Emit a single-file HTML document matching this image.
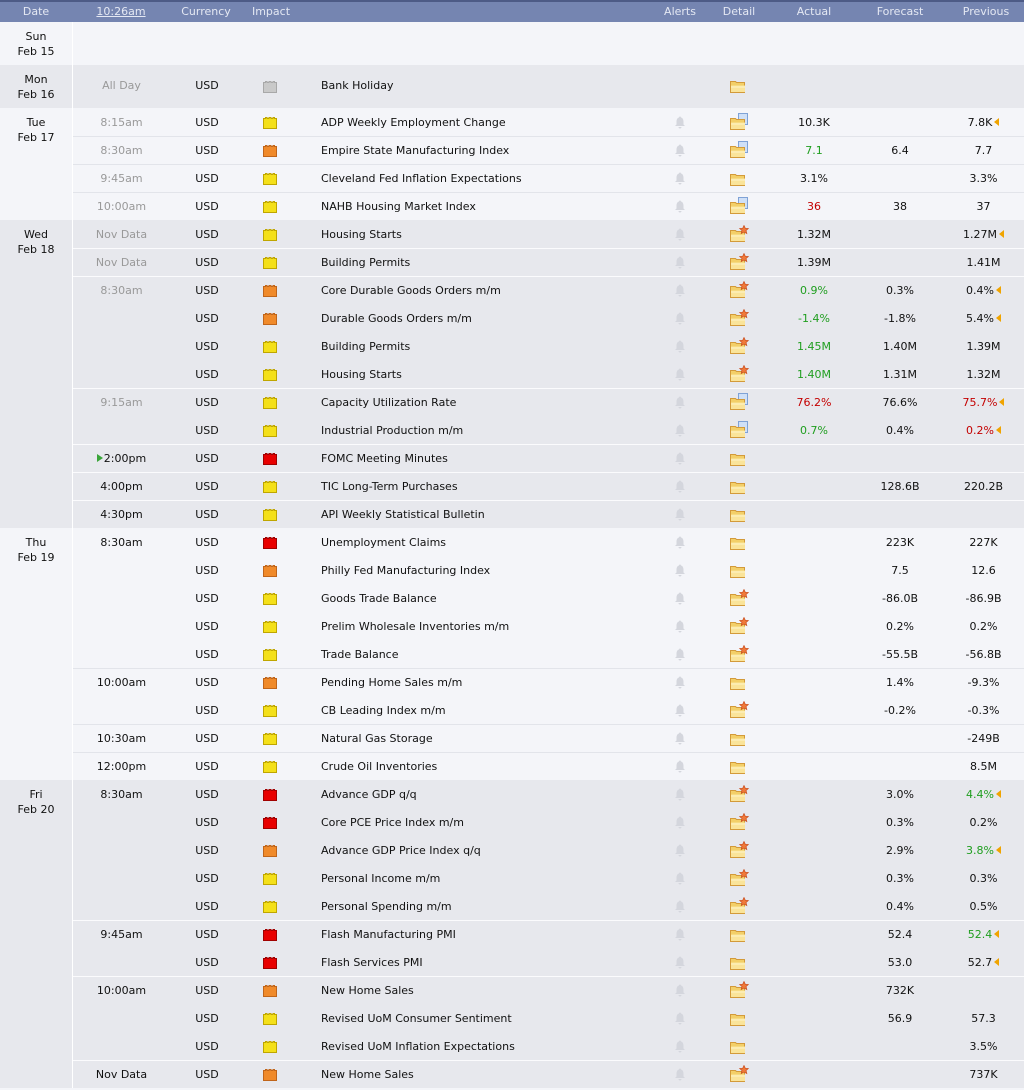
<!DOCTYPE html>
<html><head><meta charset="utf-8">
<style>
*{margin:0;padding:0;box-sizing:border-box}
body{width:1024px;height:1090px;background:#f4f5f9;font-family:"DejaVu Sans","Liberation Sans",sans-serif;font-size:11px;color:#111;overflow:hidden;position:relative}
.hd{height:22px;background:#7585b1;border-top:2px solid #4d5b86;color:#e4e8f3;font-weight:normal;display:flex;align-items:center;position:relative}
.hd span{position:absolute;top:3px;transform:translateX(-50%)}
.day{display:flex}
.day.g{background:#e7e8ed}
.day.l{background:#f4f5f9}
.dc{width:73px;border-right:1px solid #fff;text-align:center;padding-top:7px;line-height:15px;flex:none}
.rows{flex:1}
.r{height:28px;position:relative;border-top:1px solid transparent}
.g .r.s{border-top-color:#fbfbfd}
.l .r.s{border-top-color:#e2e4ea}
.r span{position:absolute;top:7px;white-space:nowrap}
.t{left:0;width:97px;text-align:center}
.gr{color:#999}
.c{left:97px;width:74px;text-align:center}
.i{left:190px;top:8px!important}
.e{left:248px}
.a{left:601px;top:7px!important}
.d{left:657px;top:4px!important}
.ac{left:693px;width:96px;text-align:center}
.f{left:789px;width:76px;text-align:center}
.p{left:870px;width:81px;text-align:center}
.gn{color:#1f9e1f}
.rd{color:#c40000}
.ar{display:inline-block;width:0;height:0;border-top:4px solid transparent;border-bottom:4px solid transparent;border-right:5px solid #f0a400;margin-left:2px;vertical-align:0}
svg{display:block}
</style></head><body>
<svg width="0" height="0" style="position:absolute">
<defs>
<symbol id="imp" viewBox="0 0 14 12"><path d="M0.5 11.5V1.5H2.5V0.5H4V1.5H6V0.5H8V1.5H10V0.5H11.5V1.5H13.5V11.5Z" stroke-width="1"/></symbol>
<symbol id="bell" viewBox="0 0 12 13"><path d="M6 0.5C6.7 0.5 7 1 7 1.5C9 2 9.5 4 9.5 6V8.5L11 10H1L2.5 8.5V6C2.5 4 3 2 5 1.5C5 1 5.3 0.5 6 0.5Z M4.5 11H7.5C7.5 12 6.8 12.5 6 12.5C5.2 12.5 4.5 12 4.5 11Z" fill="#d4d6dd"/></symbol>
<symbol id="fold" viewBox="0 0 16 14"><path d="M0.5 2.5H5.5L6.5 3.5H14.5V13.5H0.5Z" fill="#f3cf68" stroke="#d39a3a"/><path d="M1 6.5H15V13H1Z" fill="#fae49a"/><path d="M1 8H15" stroke="#fff4c8"/></symbol>
</defs></svg>

<div class="hd">
<span style="left:36px">Date</span>
<span style="left:121px;text-decoration:underline">10:26am</span>
<span style="left:206px">Currency</span>
<span style="left:271px">Impact</span>
<span style="left:680px">Alerts</span>
<span style="left:739px">Detail</span>
<span style="left:814px">Actual</span>
<span style="left:900px">Forecast</span>
<span style="left:986px">Previous</span>
</div>

<div class="day l" style="height:43px"><div class="dc">Sun<br>Feb 15</div><div class="rows"></div></div>

<div class="day g" style="height:43px"><div class="dc">Mon<br>Feb 16</div><div class="rows">
<div class="r" style="height:43px"><span class="t gr" style="top:13px">All Day</span><span class="c" style="top:13px">USD</span><span class="i" style="top:15px!important"><svg width="14" height="12"><use href="#imp" fill="#c9c9c9" stroke="#a8a8a8"/></svg></span><span class="e" style="top:13px">Bank Holiday</span><span class="d" style="top:13px!important"><svg width="16" height="14"><use href="#fold"/></svg></span></div>
</div></div>

<div class="day l"><div class="dc">Tue<br>Feb 17</div><div class="rows">
<div class="r"><span class="t gr">8:15am</span><span class="c">USD</span><span class="i"><svg width="14" height="12"><use href="#imp" fill="#f4e01a" stroke="#bfa600"/></svg></span><span class="e">ADP Weekly Employment Change</span><span class="a"><svg width="12" height="13"><use href="#bell"/></svg></span><span class="d"><svg width="20" height="18"><rect x="8.5" y="0.5" width="9" height="11" fill="#cfe0f7" stroke="#7fa2d6"/><use href="#fold" x="0" y="3" width="16" height="14"/></svg></span><span class="ac">10.3K</span><span class="p">7.8K<i class="ar"></i></span></div>
<div class="r s"><span class="t gr">8:30am</span><span class="c">USD</span><span class="i"><svg width="14" height="12"><use href="#imp" fill="#f08a2a" stroke="#c0651a"/></svg></span><span class="e">Empire State Manufacturing Index</span><span class="a"><svg width="12" height="13"><use href="#bell"/></svg></span><span class="d"><svg width="20" height="18"><rect x="8.5" y="0.5" width="9" height="11" fill="#cfe0f7" stroke="#7fa2d6"/><use href="#fold" x="0" y="3" width="16" height="14"/></svg></span><span class="ac gn">7.1</span><span class="f">6.4</span><span class="p">7.7</span></div>
<div class="r s"><span class="t gr">9:45am</span><span class="c">USD</span><span class="i"><svg width="14" height="12"><use href="#imp" fill="#f4e01a" stroke="#bfa600"/></svg></span><span class="e">Cleveland Fed Inflation Expectations</span><span class="a"><svg width="12" height="13"><use href="#bell"/></svg></span><span class="d"><svg width="20" height="18"><use href="#fold" x="0" y="3" width="16" height="14"/></svg></span><span class="ac">3.1%</span><span class="p">3.3%</span></div>
<div class="r s"><span class="t gr">10:00am</span><span class="c">USD</span><span class="i"><svg width="14" height="12"><use href="#imp" fill="#f4e01a" stroke="#bfa600"/></svg></span><span class="e">NAHB Housing Market Index</span><span class="a"><svg width="12" height="13"><use href="#bell"/></svg></span><span class="d"><svg width="20" height="18"><rect x="8.5" y="0.5" width="9" height="11" fill="#cfe0f7" stroke="#7fa2d6"/><use href="#fold" x="0" y="3" width="16" height="14"/></svg></span><span class="ac rd">36</span><span class="f">38</span><span class="p">37</span></div>
</div></div>

<div class="day g"><div class="dc">Wed<br>Feb 18</div><div class="rows">
<div class="r"><span class="t gr">Nov Data</span><span class="c">USD</span><span class="i"><svg width="14" height="12"><use href="#imp" fill="#f4e01a" stroke="#bfa600"/></svg></span><span class="e">Housing Starts</span><span class="a"><svg width="12" height="13"><use href="#bell"/></svg></span><span class="d"><svg width="20" height="18"><use href="#fold" x="0" y="3" width="16" height="14"/><path d="M14 0.5L15.3 3.3L18.3 3.5L16 5.5L16.8 8.5L14 7L11.2 8.5L12 5.5L9.7 3.5L12.7 3.3Z" fill="#f07a3a" stroke="#c84a1a" stroke-width="0.7"/></svg></span><span class="ac">1.32M</span><span class="p">1.27M<i class="ar"></i></span></div>
<div class="r s"><span class="t gr">Nov Data</span><span class="c">USD</span><span class="i"><svg width="14" height="12"><use href="#imp" fill="#f4e01a" stroke="#bfa600"/></svg></span><span class="e">Building Permits</span><span class="a"><svg width="12" height="13"><use href="#bell"/></svg></span><span class="d"><svg width="20" height="18"><use href="#fold" x="0" y="3" width="16" height="14"/><path d="M14 0.5L15.3 3.3L18.3 3.5L16 5.5L16.8 8.5L14 7L11.2 8.5L12 5.5L9.7 3.5L12.7 3.3Z" fill="#f07a3a" stroke="#c84a1a" stroke-width="0.7"/></svg></span><span class="ac">1.39M</span><span class="p">1.41M</span></div>
<div class="r s"><span class="t gr">8:30am</span><span class="c">USD</span><span class="i"><svg width="14" height="12"><use href="#imp" fill="#f08a2a" stroke="#c0651a"/></svg></span><span class="e">Core Durable Goods Orders m/m</span><span class="a"><svg width="12" height="13"><use href="#bell"/></svg></span><span class="d"><svg width="20" height="18"><use href="#fold" x="0" y="3" width="16" height="14"/><path d="M14 0.5L15.3 3.3L18.3 3.5L16 5.5L16.8 8.5L14 7L11.2 8.5L12 5.5L9.7 3.5L12.7 3.3Z" fill="#f07a3a" stroke="#c84a1a" stroke-width="0.7"/></svg></span><span class="ac gn">0.9%</span><span class="f">0.3%</span><span class="p">0.4%<i class="ar"></i></span></div>
<div class="r"><span class="c">USD</span><span class="i"><svg width="14" height="12"><use href="#imp" fill="#f08a2a" stroke="#c0651a"/></svg></span><span class="e">Durable Goods Orders m/m</span><span class="a"><svg width="12" height="13"><use href="#bell"/></svg></span><span class="d"><svg width="20" height="18"><use href="#fold" x="0" y="3" width="16" height="14"/><path d="M14 0.5L15.3 3.3L18.3 3.5L16 5.5L16.8 8.5L14 7L11.2 8.5L12 5.5L9.7 3.5L12.7 3.3Z" fill="#f07a3a" stroke="#c84a1a" stroke-width="0.7"/></svg></span><span class="ac gn">-1.4%</span><span class="f">-1.8%</span><span class="p">5.4%<i class="ar"></i></span></div>
<div class="r"><span class="c">USD</span><span class="i"><svg width="14" height="12"><use href="#imp" fill="#f4e01a" stroke="#bfa600"/></svg></span><span class="e">Building Permits</span><span class="a"><svg width="12" height="13"><use href="#bell"/></svg></span><span class="d"><svg width="20" height="18"><use href="#fold" x="0" y="3" width="16" height="14"/><path d="M14 0.5L15.3 3.3L18.3 3.5L16 5.5L16.8 8.5L14 7L11.2 8.5L12 5.5L9.7 3.5L12.7 3.3Z" fill="#f07a3a" stroke="#c84a1a" stroke-width="0.7"/></svg></span><span class="ac gn">1.45M</span><span class="f">1.40M</span><span class="p">1.39M</span></div>
<div class="r"><span class="c">USD</span><span class="i"><svg width="14" height="12"><use href="#imp" fill="#f4e01a" stroke="#bfa600"/></svg></span><span class="e">Housing Starts</span><span class="a"><svg width="12" height="13"><use href="#bell"/></svg></span><span class="d"><svg width="20" height="18"><use href="#fold" x="0" y="3" width="16" height="14"/><path d="M14 0.5L15.3 3.3L18.3 3.5L16 5.5L16.8 8.5L14 7L11.2 8.5L12 5.5L9.7 3.5L12.7 3.3Z" fill="#f07a3a" stroke="#c84a1a" stroke-width="0.7"/></svg></span><span class="ac gn">1.40M</span><span class="f">1.31M</span><span class="p">1.32M</span></div>
<div class="r s"><span class="t gr">9:15am</span><span class="c">USD</span><span class="i"><svg width="14" height="12"><use href="#imp" fill="#f4e01a" stroke="#bfa600"/></svg></span><span class="e">Capacity Utilization Rate</span><span class="a"><svg width="12" height="13"><use href="#bell"/></svg></span><span class="d"><svg width="20" height="18"><rect x="8.5" y="0.5" width="9" height="11" fill="#cfe0f7" stroke="#7fa2d6"/><use href="#fold" x="0" y="3" width="16" height="14"/></svg></span><span class="ac rd">76.2%</span><span class="f">76.6%</span><span class="p rd">75.7%<i class="ar"></i></span></div>
<div class="r"><span class="c">USD</span><span class="i"><svg width="14" height="12"><use href="#imp" fill="#f4e01a" stroke="#bfa600"/></svg></span><span class="e">Industrial Production m/m</span><span class="a"><svg width="12" height="13"><use href="#bell"/></svg></span><span class="d"><svg width="20" height="18"><rect x="8.5" y="0.5" width="9" height="11" fill="#cfe0f7" stroke="#7fa2d6"/><use href="#fold" x="0" y="3" width="16" height="14"/></svg></span><span class="ac gn">0.7%</span><span class="f">0.4%</span><span class="p rd">0.2%<i class="ar"></i></span></div>
<div class="r s"><span class="t"><i style="display:inline-block;width:0;height:0;border-top:4px solid transparent;border-bottom:4px solid transparent;border-left:6px solid #3aa53a;margin-right:1px"></i>2:00pm</span><span class="c">USD</span><span class="i"><svg width="14" height="12"><use href="#imp" fill="#e80000" stroke="#a00000"/></svg></span><span class="e">FOMC Meeting Minutes</span><span class="a"><svg width="12" height="13"><use href="#bell"/></svg></span><span class="d"><svg width="20" height="18"><use href="#fold" x="0" y="3" width="16" height="14"/></svg></span></div>
<div class="r s"><span class="t">4:00pm</span><span class="c">USD</span><span class="i"><svg width="14" height="12"><use href="#imp" fill="#f4e01a" stroke="#bfa600"/></svg></span><span class="e">TIC Long-Term Purchases</span><span class="a"><svg width="12" height="13"><use href="#bell"/></svg></span><span class="d"><svg width="20" height="18"><use href="#fold" x="0" y="3" width="16" height="14"/></svg></span><span class="f">128.6B</span><span class="p">220.2B</span></div>
<div class="r s"><span class="t">4:30pm</span><span class="c">USD</span><span class="i"><svg width="14" height="12"><use href="#imp" fill="#f4e01a" stroke="#bfa600"/></svg></span><span class="e">API Weekly Statistical Bulletin</span><span class="a"><svg width="12" height="13"><use href="#bell"/></svg></span><span class="d"><svg width="20" height="18"><use href="#fold" x="0" y="3" width="16" height="14"/></svg></span></div>
</div></div>

<div class="day l"><div class="dc">Thu<br>Feb 19</div><div class="rows">
<div class="r"><span class="t">8:30am</span><span class="c">USD</span><span class="i"><svg width="14" height="12"><use href="#imp" fill="#e80000" stroke="#a00000"/></svg></span><span class="e">Unemployment Claims</span><span class="a"><svg width="12" height="13"><use href="#bell"/></svg></span><span class="d"><svg width="20" height="18"><use href="#fold" x="0" y="3" width="16" height="14"/></svg></span><span class="f">223K</span><span class="p">227K</span></div>
<div class="r"><span class="c">USD</span><span class="i"><svg width="14" height="12"><use href="#imp" fill="#f08a2a" stroke="#c0651a"/></svg></span><span class="e">Philly Fed Manufacturing Index</span><span class="a"><svg width="12" height="13"><use href="#bell"/></svg></span><span class="d"><svg width="20" height="18"><use href="#fold" x="0" y="3" width="16" height="14"/></svg></span><span class="f">7.5</span><span class="p">12.6</span></div>
<div class="r"><span class="c">USD</span><span class="i"><svg width="14" height="12"><use href="#imp" fill="#f4e01a" stroke="#bfa600"/></svg></span><span class="e">Goods Trade Balance</span><span class="a"><svg width="12" height="13"><use href="#bell"/></svg></span><span class="d"><svg width="20" height="18"><use href="#fold" x="0" y="3" width="16" height="14"/><path d="M14 0.5L15.3 3.3L18.3 3.5L16 5.5L16.8 8.5L14 7L11.2 8.5L12 5.5L9.7 3.5L12.7 3.3Z" fill="#f07a3a" stroke="#c84a1a" stroke-width="0.7"/></svg></span><span class="f">-86.0B</span><span class="p">-86.9B</span></div>
<div class="r"><span class="c">USD</span><span class="i"><svg width="14" height="12"><use href="#imp" fill="#f4e01a" stroke="#bfa600"/></svg></span><span class="e">Prelim Wholesale Inventories m/m</span><span class="a"><svg width="12" height="13"><use href="#bell"/></svg></span><span class="d"><svg width="20" height="18"><use href="#fold" x="0" y="3" width="16" height="14"/><path d="M14 0.5L15.3 3.3L18.3 3.5L16 5.5L16.8 8.5L14 7L11.2 8.5L12 5.5L9.7 3.5L12.7 3.3Z" fill="#f07a3a" stroke="#c84a1a" stroke-width="0.7"/></svg></span><span class="f">0.2%</span><span class="p">0.2%</span></div>
<div class="r"><span class="c">USD</span><span class="i"><svg width="14" height="12"><use href="#imp" fill="#f4e01a" stroke="#bfa600"/></svg></span><span class="e">Trade Balance</span><span class="a"><svg width="12" height="13"><use href="#bell"/></svg></span><span class="d"><svg width="20" height="18"><use href="#fold" x="0" y="3" width="16" height="14"/><path d="M14 0.5L15.3 3.3L18.3 3.5L16 5.5L16.8 8.5L14 7L11.2 8.5L12 5.5L9.7 3.5L12.7 3.3Z" fill="#f07a3a" stroke="#c84a1a" stroke-width="0.7"/></svg></span><span class="f">-55.5B</span><span class="p">-56.8B</span></div>
<div class="r s"><span class="t">10:00am</span><span class="c">USD</span><span class="i"><svg width="14" height="12"><use href="#imp" fill="#f08a2a" stroke="#c0651a"/></svg></span><span class="e">Pending Home Sales m/m</span><span class="a"><svg width="12" height="13"><use href="#bell"/></svg></span><span class="d"><svg width="20" height="18"><use href="#fold" x="0" y="3" width="16" height="14"/></svg></span><span class="f">1.4%</span><span class="p">-9.3%</span></div>
<div class="r"><span class="c">USD</span><span class="i"><svg width="14" height="12"><use href="#imp" fill="#f4e01a" stroke="#bfa600"/></svg></span><span class="e">CB Leading Index m/m</span><span class="a"><svg width="12" height="13"><use href="#bell"/></svg></span><span class="d"><svg width="20" height="18"><use href="#fold" x="0" y="3" width="16" height="14"/><path d="M14 0.5L15.3 3.3L18.3 3.5L16 5.5L16.8 8.5L14 7L11.2 8.5L12 5.5L9.7 3.5L12.7 3.3Z" fill="#f07a3a" stroke="#c84a1a" stroke-width="0.7"/></svg></span><span class="f">-0.2%</span><span class="p">-0.3%</span></div>
<div class="r s"><span class="t">10:30am</span><span class="c">USD</span><span class="i"><svg width="14" height="12"><use href="#imp" fill="#f4e01a" stroke="#bfa600"/></svg></span><span class="e">Natural Gas Storage</span><span class="a"><svg width="12" height="13"><use href="#bell"/></svg></span><span class="d"><svg width="20" height="18"><use href="#fold" x="0" y="3" width="16" height="14"/></svg></span><span class="p">-249B</span></div>
<div class="r s"><span class="t">12:00pm</span><span class="c">USD</span><span class="i"><svg width="14" height="12"><use href="#imp" fill="#f4e01a" stroke="#bfa600"/></svg></span><span class="e">Crude Oil Inventories</span><span class="a"><svg width="12" height="13"><use href="#bell"/></svg></span><span class="d"><svg width="20" height="18"><use href="#fold" x="0" y="3" width="16" height="14"/></svg></span><span class="p">8.5M</span></div>
</div></div>

<div class="day g"><div class="dc">Fri<br>Feb 20</div><div class="rows">
<div class="r"><span class="t">8:30am</span><span class="c">USD</span><span class="i"><svg width="14" height="12"><use href="#imp" fill="#e80000" stroke="#a00000"/></svg></span><span class="e">Advance GDP q/q</span><span class="a"><svg width="12" height="13"><use href="#bell"/></svg></span><span class="d"><svg width="20" height="18"><use href="#fold" x="0" y="3" width="16" height="14"/><path d="M14 0.5L15.3 3.3L18.3 3.5L16 5.5L16.8 8.5L14 7L11.2 8.5L12 5.5L9.7 3.5L12.7 3.3Z" fill="#f07a3a" stroke="#c84a1a" stroke-width="0.7"/></svg></span><span class="f">3.0%</span><span class="p gn">4.4%<i class="ar"></i></span></div>
<div class="r"><span class="c">USD</span><span class="i"><svg width="14" height="12"><use href="#imp" fill="#e80000" stroke="#a00000"/></svg></span><span class="e">Core PCE Price Index m/m</span><span class="a"><svg width="12" height="13"><use href="#bell"/></svg></span><span class="d"><svg width="20" height="18"><use href="#fold" x="0" y="3" width="16" height="14"/><path d="M14 0.5L15.3 3.3L18.3 3.5L16 5.5L16.8 8.5L14 7L11.2 8.5L12 5.5L9.7 3.5L12.7 3.3Z" fill="#f07a3a" stroke="#c84a1a" stroke-width="0.7"/></svg></span><span class="f">0.3%</span><span class="p">0.2%</span></div>
<div class="r"><span class="c">USD</span><span class="i"><svg width="14" height="12"><use href="#imp" fill="#f08a2a" stroke="#c0651a"/></svg></span><span class="e">Advance GDP Price Index q/q</span><span class="a"><svg width="12" height="13"><use href="#bell"/></svg></span><span class="d"><svg width="20" height="18"><use href="#fold" x="0" y="3" width="16" height="14"/><path d="M14 0.5L15.3 3.3L18.3 3.5L16 5.5L16.8 8.5L14 7L11.2 8.5L12 5.5L9.7 3.5L12.7 3.3Z" fill="#f07a3a" stroke="#c84a1a" stroke-width="0.7"/></svg></span><span class="f">2.9%</span><span class="p gn">3.8%<i class="ar"></i></span></div>
<div class="r"><span class="c">USD</span><span class="i"><svg width="14" height="12"><use href="#imp" fill="#f4e01a" stroke="#bfa600"/></svg></span><span class="e">Personal Income m/m</span><span class="a"><svg width="12" height="13"><use href="#bell"/></svg></span><span class="d"><svg width="20" height="18"><use href="#fold" x="0" y="3" width="16" height="14"/><path d="M14 0.5L15.3 3.3L18.3 3.5L16 5.5L16.8 8.5L14 7L11.2 8.5L12 5.5L9.7 3.5L12.7 3.3Z" fill="#f07a3a" stroke="#c84a1a" stroke-width="0.7"/></svg></span><span class="f">0.3%</span><span class="p">0.3%</span></div>
<div class="r"><span class="c">USD</span><span class="i"><svg width="14" height="12"><use href="#imp" fill="#f4e01a" stroke="#bfa600"/></svg></span><span class="e">Personal Spending m/m</span><span class="a"><svg width="12" height="13"><use href="#bell"/></svg></span><span class="d"><svg width="20" height="18"><use href="#fold" x="0" y="3" width="16" height="14"/><path d="M14 0.5L15.3 3.3L18.3 3.5L16 5.5L16.8 8.5L14 7L11.2 8.5L12 5.5L9.7 3.5L12.7 3.3Z" fill="#f07a3a" stroke="#c84a1a" stroke-width="0.7"/></svg></span><span class="f">0.4%</span><span class="p">0.5%</span></div>
<div class="r s"><span class="t">9:45am</span><span class="c">USD</span><span class="i"><svg width="14" height="12"><use href="#imp" fill="#e80000" stroke="#a00000"/></svg></span><span class="e">Flash Manufacturing PMI</span><span class="a"><svg width="12" height="13"><use href="#bell"/></svg></span><span class="d"><svg width="20" height="18"><use href="#fold" x="0" y="3" width="16" height="14"/></svg></span><span class="f">52.4</span><span class="p gn">52.4<i class="ar"></i></span></div>
<div class="r"><span class="c">USD</span><span class="i"><svg width="14" height="12"><use href="#imp" fill="#e80000" stroke="#a00000"/></svg></span><span class="e">Flash Services PMI</span><span class="a"><svg width="12" height="13"><use href="#bell"/></svg></span><span class="d"><svg width="20" height="18"><use href="#fold" x="0" y="3" width="16" height="14"/></svg></span><span class="f">53.0</span><span class="p">52.7<i class="ar"></i></span></div>
<div class="r s"><span class="t">10:00am</span><span class="c">USD</span><span class="i"><svg width="14" height="12"><use href="#imp" fill="#f08a2a" stroke="#c0651a"/></svg></span><span class="e">New Home Sales</span><span class="a"><svg width="12" height="13"><use href="#bell"/></svg></span><span class="d"><svg width="20" height="18"><use href="#fold" x="0" y="3" width="16" height="14"/><path d="M14 0.5L15.3 3.3L18.3 3.5L16 5.5L16.8 8.5L14 7L11.2 8.5L12 5.5L9.7 3.5L12.7 3.3Z" fill="#f07a3a" stroke="#c84a1a" stroke-width="0.7"/></svg></span><span class="f">732K</span></div>
<div class="r"><span class="c">USD</span><span class="i"><svg width="14" height="12"><use href="#imp" fill="#f4e01a" stroke="#bfa600"/></svg></span><span class="e">Revised UoM Consumer Sentiment</span><span class="a"><svg width="12" height="13"><use href="#bell"/></svg></span><span class="d"><svg width="20" height="18"><use href="#fold" x="0" y="3" width="16" height="14"/></svg></span><span class="f">56.9</span><span class="p">57.3</span></div>
<div class="r"><span class="c">USD</span><span class="i"><svg width="14" height="12"><use href="#imp" fill="#f4e01a" stroke="#bfa600"/></svg></span><span class="e">Revised UoM Inflation Expectations</span><span class="a"><svg width="12" height="13"><use href="#bell"/></svg></span><span class="d"><svg width="20" height="18"><use href="#fold" x="0" y="3" width="16" height="14"/></svg></span><span class="p">3.5%</span></div>
<div class="r s"><span class="t">Nov Data</span><span class="c">USD</span><span class="i"><svg width="14" height="12"><use href="#imp" fill="#f08a2a" stroke="#c0651a"/></svg></span><span class="e">New Home Sales</span><span class="a"><svg width="12" height="13"><use href="#bell"/></svg></span><span class="d"><svg width="20" height="18"><use href="#fold" x="0" y="3" width="16" height="14"/><path d="M14 0.5L15.3 3.3L18.3 3.5L16 5.5L16.8 8.5L14 7L11.2 8.5L12 5.5L9.7 3.5L12.7 3.3Z" fill="#f07a3a" stroke="#c84a1a" stroke-width="0.7"/></svg></span><span class="p">737K</span></div>
</div></div>
</body></html>
